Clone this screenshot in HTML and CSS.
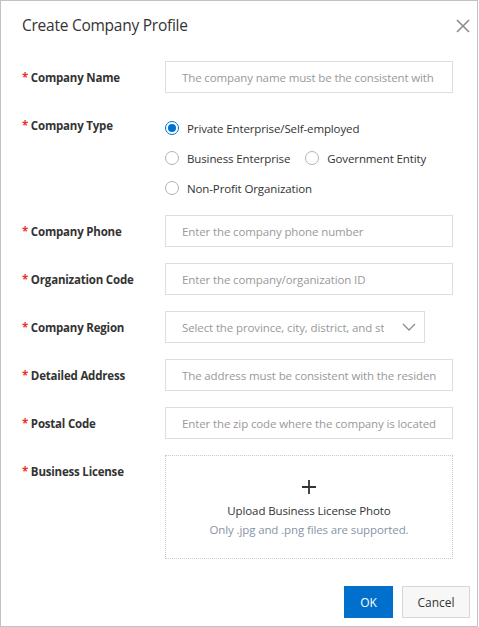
FILE: index.html
```html
<!DOCTYPE html>
<html lang="en">
<head>
<meta charset="utf-8">
<title>Create Company Profile</title>
<link rel="stylesheet" href="styles.css">
</head>
<body>
<div class="dialog">
  <div class="header">
    <div class="title">Create Company Profile</div>
    <button class="close" aria-label="Close">
      <svg width="14" height="14" viewBox="0 0 14 14"><path d="M1 1L13 13M13 1L1 13" stroke="#8c8c8c" stroke-width="1.6" fill="none"/></svg>
    </button>
  </div>
  <form class="form">
    <div class="field">
      <label class="label"><span class="req">*</span> Company Name</label>
      <input class="input" type="text" placeholder="The company name must be the consistent with the business license">
    </div>
    <div class="field field-type">
      <label class="label"><span class="req">*</span> Company Type</label>
      <div class="radios">
        <div class="radio-row">
          <label class="radio checked"><span class="dot"></span>Private Enterprise/Self-employed</label>
        </div>
        <div class="radio-row">
          <label class="radio"><span class="dot"></span>Business Enterprise</label>
          <label class="radio"><span class="dot"></span>Government Entity</label>
        </div>
        <div class="radio-row">
          <label class="radio"><span class="dot"></span>Non-Profit Organization</label>
        </div>
      </div>
    </div>
    <div class="field">
      <label class="label"><span class="req">*</span> Company Phone</label>
      <input class="input" type="text" placeholder="Enter the company phone number">
    </div>
    <div class="field">
      <label class="label"><span class="req">*</span> Organization Code</label>
      <input class="input" type="text" placeholder="Enter the company/organization ID">
    </div>
    <div class="field">
      <label class="label"><span class="req">*</span> Company Region</label>
      <div class="select">
        <span class="select-text">Select the province, city, district, and street</span>
        <svg class="chev" width="14" height="8" viewBox="0 0 14 8"><path d="M1 1L7 7L13 1" stroke="#8c8c8c" stroke-width="1.3" fill="none"/></svg>
      </div>
    </div>
    <div class="field">
      <label class="label"><span class="req">*</span> Detailed Address</label>
      <input class="input" type="text" placeholder="The address must be consistent with the residence on the license">
    </div>
    <div class="field">
      <label class="label"><span class="req">*</span> Postal Code</label>
      <input class="input" type="text" placeholder="Enter the zip code where the company is located">
    </div>
    <div class="field">
      <label class="label"><span class="req">*</span> Business License</label>
      <div class="upload">
        <svg class="plus" width="14" height="14" viewBox="0 0 14 14"><path d="M7 0V14M0 7H14" stroke="#333" stroke-width="1.8"/></svg>
        <div class="upload-title">Upload Business License Photo</div>
        <div class="upload-hint">Only .jpg and .png files are supported.</div>
      </div>
    </div>
  </form>
  <div class="footer">
    <button class="btn btn-primary">OK</button>
    <button class="btn btn-default">Cancel</button>
  </div>
</div>
</body>
</html>
```
FILE: styles.css
```css
* { box-sizing: border-box; }
html, body { margin: 0; padding: 0; background: #fff; }
body {
  font-family: "Open Sans", "Noto Sans", sans-serif;
  color: #333; font-size: 11.5px; letter-spacing: -0.12px;
}

.dialog {
  width: 478px;
  height: 627px;
  border: 1px solid #c2c2c2;
  background: #fff;
  display: flex;
  flex-direction: column;
}

.header {
  display: flex;
  justify-content: space-between;
  align-items: flex-start;
  padding: 12px 7px 0 21px;
}
.title { font-size: 15.5px; line-height: 24px; color: #333; letter-spacing: -0.25px; }
.close {
  border: 0; background: none; padding: 0; margin-top: 6px;
  width: 14px; height: 14px; display: block;
}
.close svg { display: block; }

.form { padding: 24px 0 0 21px; margin: 0; }
.field { display: flex; align-items: flex-start; margin-bottom: 16px; }
.field-type { margin-bottom: 12px; }
.label {
  width: 143px; height: 32px; flex: none;
  padding-top: 2px;
  font-weight: 700; font-size: 11.5px; line-height: 30px; color: #333;
  letter-spacing: -0.2px;
}
.req { color: #e8322b; font-weight: 700; }

.input {
  width: 288px; height: 32px;
  border: 1px solid #dedede; border-radius: 0;
  padding: 0 16px; font-family: inherit; font-size: 11.5px; letter-spacing: -0.12px; color: #333;
  outline: none; background: #fff;
}
.input::placeholder { color: #999; opacity: 1; }

.radios { padding-top: 4px; }
.radio-row { display: flex; height: 30px; align-items: center; }
.radio { display: flex; align-items: center; margin-right: 15px; color: #333; }
.dot {
  width: 14px; height: 14px; border-radius: 50%;
  border: 1px solid #b3b3b3; margin-right: 8px; flex: none; background: #fff;
}
.radio.checked .dot { border-color: #0070cc; position: relative; }
.radio.checked .dot::after {
  content: ""; position: absolute; left: 2px; top: 2px;
  width: 8px; height: 8px; border-radius: 50%; background: #0070cc;
}

.select {
  width: 260px; height: 32px; border: 1px solid #dedede;
  display: flex; align-items: center; padding: 0 8px 0 16px;
}
.select-text {
  flex: 1; min-width: 0; overflow: hidden; white-space: nowrap;
  color: #999; margin-right: 18px;
}
.chev { flex: none; display: block; }

.upload {
  width: 288px; height: 104px;
  border: 1px dotted #c9c9c9;
  display: flex; flex-direction: column; align-items: center;
  padding-top: 24px;
}
.plus { display: block; margin-bottom: 8px; }
.upload-title { line-height: 18px; color: #333; }
.upload-hint { line-height: 20px; color: #8794a8; }

.footer {
  margin-top: auto;
  display: flex; justify-content: flex-end; gap: 9px;
  padding: 0 7px 8px 0;
}
.btn {
  height: 32px; font-family: inherit; font-size: 12px; border-radius: 0; padding: 0;
}
.btn-primary { width: 49px; background: #0070cc; color: #fff; border: 1px solid #0070cc; }
.btn-default { width: 68px; background: #f7f7f7; color: #333; border: 1px solid #d6d6d6; }
```
